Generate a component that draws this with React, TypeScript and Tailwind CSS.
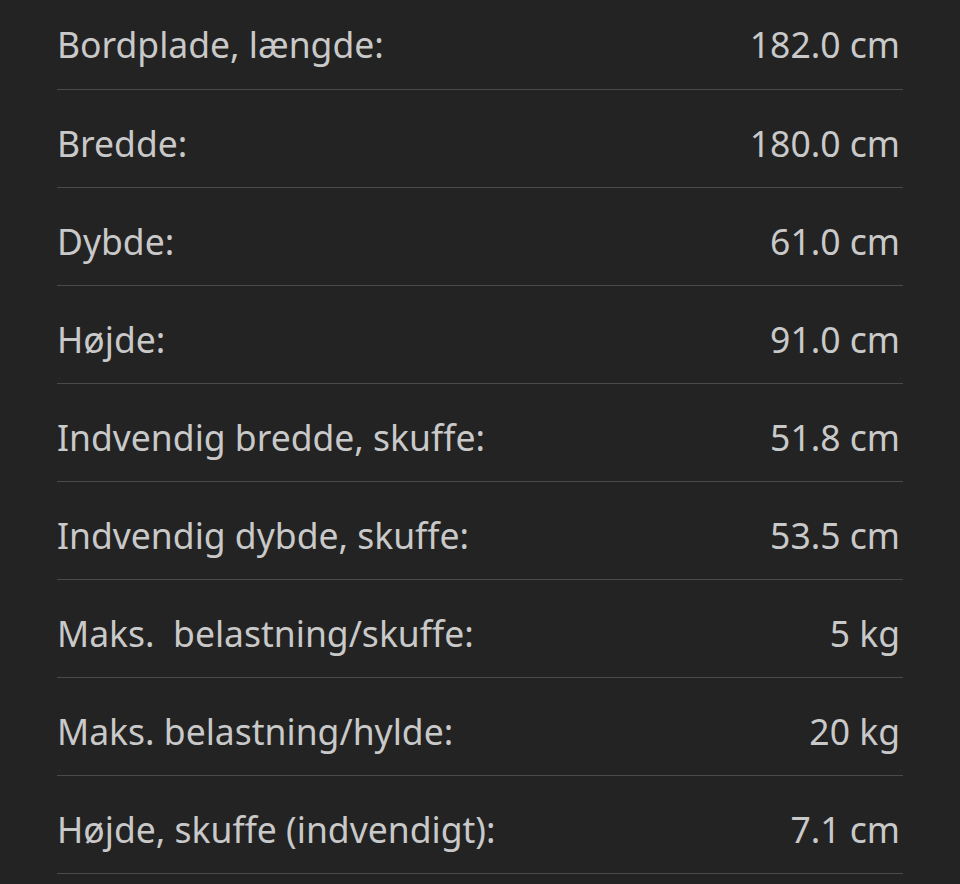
const specs = [
  { label: "Bordplade, længde:", value: "182.0 cm" },
  { label: "Bredde:", value: "180.0 cm" },
  { label: "Dybde:", value: "61.0 cm" },
  { label: "Højde:", value: "91.0 cm" },
  { label: "Indvendig bredde, skuffe:", value: "51.8 cm" },
  { label: "Indvendig dybde, skuffe:", value: "53.5 cm" },
  { label: "Maks.  belastning/skuffe:", value: "5 kg" },
  { label: "Maks. belastning/hylde:", value: "20 kg" },
  { label: "Højde, skuffe (indvendigt):", value: "7.1 cm" },
];

export default function App() {
  return (
    <div
      className="min-h-[884px] w-[960px] bg-[#232323] pl-[57px] pr-[57px] text-[#c9c9c9]"
      style={{ fontFamily: '"Noto Sans", "Open Sans", sans-serif' }}
    >
      {specs.map((s) => (
        <div
          key={s.label}
          className="flex h-[98px] items-start justify-between border-b border-[#4a4a4a] pt-[31px] first:h-[90px] first:pt-[22px]"
        >
          <span className="whitespace-pre text-[35.5px] leading-[44px]">{s.label}</span>
          <span className="pr-[3px] text-[35.5px] leading-[44px]">{s.value}</span>
        </div>
      ))}
    </div>
  );
}
